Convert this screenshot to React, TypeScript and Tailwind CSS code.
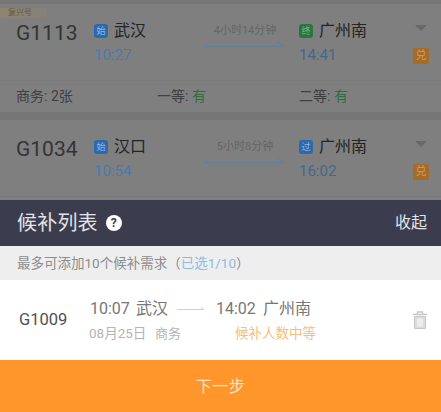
import React from "react";

const cjk = "font-['Roboto','Noto_Sans_CJK_SC',sans-serif]";

const Badge: React.FC<{ label: string; green?: boolean }> = ({ label, green }) => (
  <span className={`flex w-[14px] h-[14px] items-center justify-center rounded-[3px] text-[9px] leading-none ${green ? "bg-[#2c7440] text-[#7fb88e]" : "bg-[#2d6aab] text-[#8fb8e4]"}`}>
    {label}
  </span>
);

const Arrow: React.FC = () => (
  <svg width="82" height="8" viewBox="0 0 82 8" fill="none" className="block">
    <path d="M0 6.5H80" stroke="#64809c" strokeWidth="1.5" />
    <path d="M73 1.5L80 6.5" stroke="#6f7c8a" strokeWidth="1.5" />
  </svg>
);

const Seat: React.FC<{ name: string; value: string; green?: boolean; className: string }> = ({ name, value, green, className }) => (
  <div className={`text-[14px] text-[#3f4042] ${className}`}>
    {name}: <span className={green ? "text-[#2f6d3e]" : ""}>{value}</span>
  </div>
);

const TrainRow: React.FC<{
  no: string; from: string; to: string; dep: string; arr: string; dur: string; endBadge: string; endGreen?: boolean;
}> = ({ no, from, to, dep, arr, dur, endBadge, endGreen }) => (
  <div className="flex h-[76px] shrink-0 items-start">
    <div className="w-[94px] pt-[17px] pl-[16px] text-[21px] leading-[25px] text-[#333436]">{no}</div>
    <div className="w-[110px] pt-[16px]">
      <div className="flex h-[22px] items-center gap-[6px]">
        <Badge label="始" />
        <span className="text-[16px] leading-[22px] text-[#232426]">{from}</span>
      </div>
      <div className="mt-[3px] text-[15px] leading-[20px] text-[#4a7aaf]">{dep}</div>
    </div>
    <div className="flex w-[95px] flex-col items-start pt-[20px]">
      <div className="w-[82px] text-center text-[11px] leading-[14px] text-[#656567]">{dur}</div>
      <div className="mt-[2px]">
        <Arrow />
      </div>
    </div>
    <div className="w-[114px] pt-[16px]">
      <div className="flex h-[22px] items-center gap-[6px]">
        <Badge label={endBadge} green={endGreen} />
        <span className="text-[16px] leading-[22px] text-[#232426]">{to}</span>
      </div>
      <div className="mt-[3px] text-[15px] leading-[20px] text-[#41688f]">{arr}</div>
    </div>
    <div className="flex w-[16px] flex-col items-center pt-[21px]">
      <div className="h-0 w-0 border-x-[6.5px] border-t-[6px] border-x-transparent border-t-[#68696c]" />
      <span className="mt-[17px] flex h-[16px] w-[16px] items-center justify-center rounded-[2px] bg-[#a56b28] text-[11px] text-[#cf9a5e]">兑</span>
    </div>
  </div>
);

const App: React.FC = () => (
  <div className={`flex h-[412px] w-[441px] flex-col overflow-hidden bg-[#7f7f7f] ${cjk}`}>
    <div className="relative flex h-[200px] shrink-0 flex-col bg-[#767676] pt-[4px]">
      <div className="h-[108px] shrink-0 bg-[#7f7f7f]">
        <div className="absolute left-0 top-[8px] flex h-[10px] w-[47px] items-center bg-gradient-to-r from-[#8e8470] to-[#85807a] pl-[8px] text-[8px] text-[#675840]">复兴号</div>
        <TrainRow no="G1113" from="武汉" to="广州南" dep="10:27" arr="14:41" dur="4小时14分钟" endBadge="终" endGreen />
        <div className="flex h-[32px] items-center border-t border-[#7a7a7a]">
          <Seat name="商务" value="2张" className="w-[157px] pl-[16px]" />
          <Seat name="一等" value="有" green className="w-[142px]" />
          <Seat name="二等" value="有" green />
        </div>
      </div>
      <div className="mt-[8px] flex-1 bg-[#7f7f7f]">
        <TrainRow no="G1034" from="汉口" to="广州南" dep="10:54" arr="16:02" dur="5小时8分钟" endBadge="过" />
        <div className="border-t border-[#7a7a7a]" />
      </div>
    </div>

    <div className="flex h-[46px] shrink-0 items-center justify-between bg-[#3b3c4e] pl-[17px] pr-[14px]">
      <div className="flex items-center gap-[8px]">
        <span className="text-[20px] tracking-[0.2px] text-[#e4e4e8]">候补列表</span>
        <span className="flex h-[16px] w-[16px] items-center justify-center rounded-full bg-white text-[12px] font-bold leading-none text-[#3b3c4e]">?</span>
      </div>
      <span className="text-[16px] text-[#e4e4e8]">收起</span>
    </div>

    <div className="flex h-[34px] shrink-0 items-center bg-[#eeeeee] pl-[17px] text-[13.5px] text-[#8c8c8c]">
      最多可添加10个候补需求（<span className="text-[#8fbbe3]">已选1/10</span>）
    </div>

    <div className="flex h-[80px] shrink-0 items-center bg-white">
      <div className="w-[89px] pl-[19px] text-[16.5px] text-[#4f4f4f]">G1009</div>
      <div className="flex flex-col">
        <div className="flex h-[24px] items-center text-[16px] text-[#777777]">
          <span className="w-[47px] pl-[1px]">10:07</span>
          <span className="w-[41px]">武汉</span>
          <svg width="28" height="6" viewBox="0 0 28 6" fill="none" className="mr-[11px] block">
            <path d="M0 3.5H27M24 1.5L27 3.5" stroke="#c5d3e0" strokeWidth="1" />
          </svg>
          <span className="w-[47px]">14:02</span>
          <span>广州南</span>
        </div>
        <div className="mt-[3px] flex h-[20px] items-center text-[13.5px] text-[#b4b4b4]">
          <span className="w-[66px]">08月25日</span>
          <span className="w-[80px] text-[13px]">商务</span>
          <span className="text-[#f2c078]">候补人数中等</span>
        </div>
      </div>
      <svg width="16" height="20" viewBox="0 0 16 20" fill="none" className="ml-auto mr-[13px] block" stroke="#c8c8c8">
        <path d="M1 4.5H15M5.5 4V2H10.5V4" strokeWidth="1.5" />
        <path d="M2.5 6.5H13.5V18.5H2.5Z" fill="#dcdcdc" strokeWidth="1" />
        <path d="M6 8.5V16.5M8 8.5V16.5M10 8.5V16.5" stroke="#ffffff" strokeWidth="1" />
      </svg>
    </div>

    <div className="flex flex-1 items-center justify-center bg-[#ff962b] pt-[2px] text-[16px] tracking-[0.5px] text-[#fbe3c3]">下一步</div>
  </div>
);

export default App;
